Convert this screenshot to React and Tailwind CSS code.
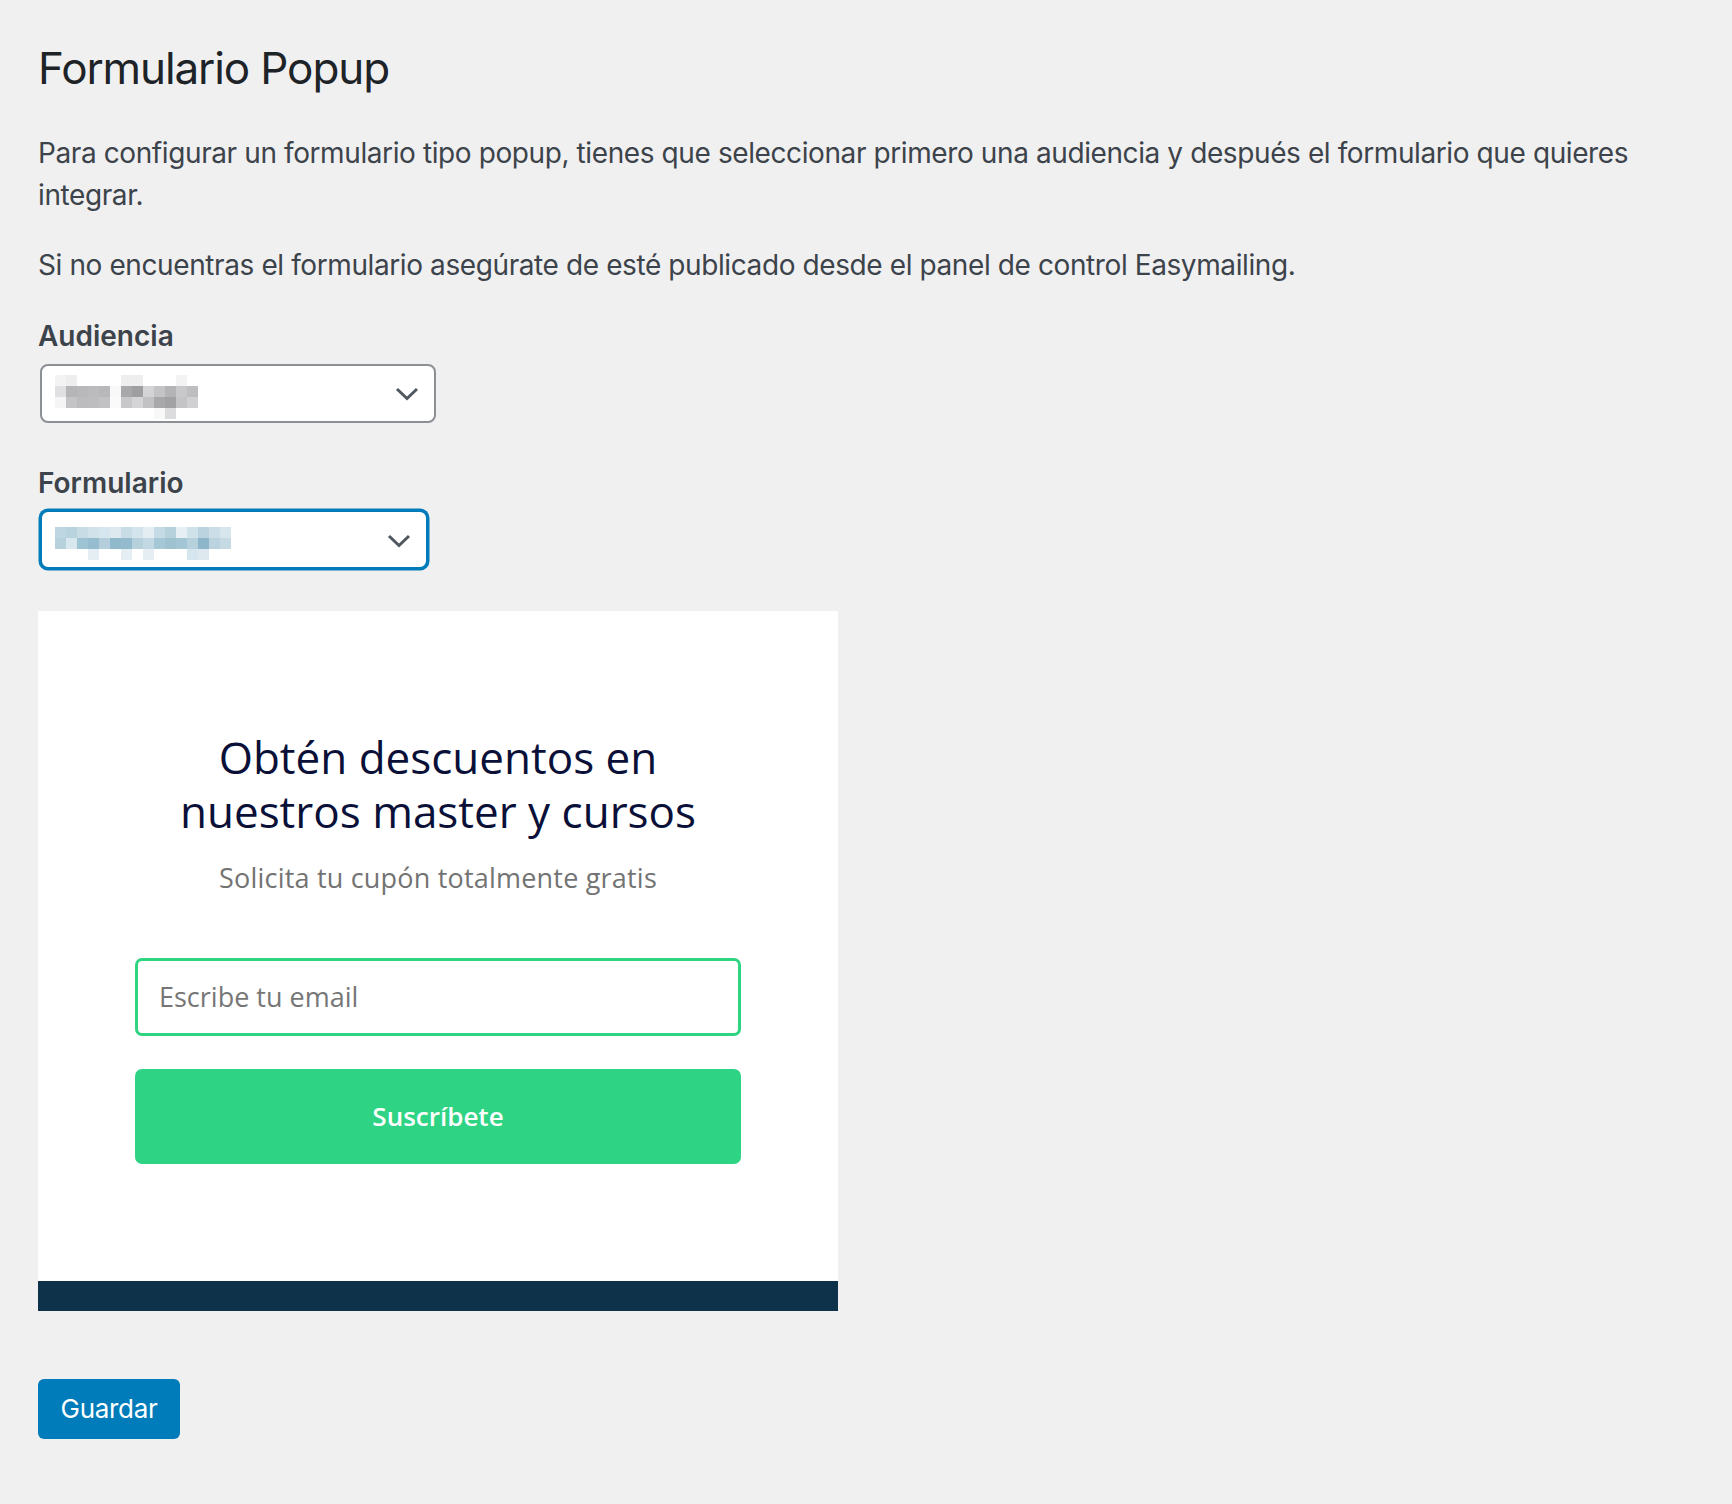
import React from "react";

// pixelated (blurred) values shown inside the two selects
const audienciaPixels = [
  ["#f3f3f4", "#eeeeef", null, null, null, null, "#eeeeef", "#eeeeef", null, null, null, "#f3f3f4", null],
  ["#e0e0e2", "#b5b5b7", "#b8b8ba", "#bbbbbd", "#b8b8ba", "#f8f8f8", "#a8a8aa", "#9e9ea0", "#d4d4d6", "#c4c4c6", "#b4b4b6", "#c8c8ca", "#bebec0"],
  ["#f5f5f5", "#c4c4c6", "#bcbcbe", "#bdbdbf", "#c2c2c4", "#fafafa", "#c8c8ca", "#d4d4d6", "#c2c2c4", "#a8a8aa", "#a2a2a4", "#c4c4c6", "#d0d0d2"],
  [null, null, null, null, null, null, null, null, null, "#f8f8f8", "#dcdcde", null, null],
];

const formularioPixels = [
  ["#bed6e2", "#b8d2de", "#c8dce6", "#d2e2ea", "#d6e6ee", "#dde9ef", "#c8dce6", "#d4e4ec", "#e4eef2", "#c4dae4", "#b6d0dc", "#e6eff4", "#cfe1e9", "#bad3df", "#cbdde6", "#d7e6ed"],
  ["#b6d0dc", "#d8e7ee", "#9ec3d3", "#96bdcf", "#b4cfdb", "#91b9cc", "#93bacd", "#b7d1dc", "#c2d8e2", "#a6c7d5", "#9fc2d1", "#a4c5d4", "#b7d1dc", "#8db6ca", "#bad3de", "#c6dae3"],
  [null, null, null, "#e4eef3", null, null, "#e4eef3", null, "#e4eef3", null, null, null, "#d6e6ee", "#dde9ef", null, null],
];

function Pixels({ rows }) {
  const size = 11;
  const cols = rows[0].length;
  return (
    <svg width={cols * size} height={rows.length * size} className="block shrink-0">
      {rows.map((row, y) =>
        row.map((c, x) => (c ? <rect key={`${x}-${y}`} x={x * size} y={y * size} width={size} height={size} fill={c} /> : null))
      )}
    </svg>
  );
}

function Chevron() {
  return (
    <svg width="24" height="14" viewBox="0 0 24 14" className="shrink-0">
      <polyline points="2,2 12,11.5 22,2" fill="none" stroke="#50575e" strokeWidth="3" />
    </svg>
  );
}

export default function App() {
  return (
    <div className="min-h-screen bg-[#f0f0f1] pl-[38px] pr-[40px] pt-[40px] pb-[66px] font-['Inter','Liberation_Sans',sans-serif] text-[#3c434a]">
      <h1 className="text-[44px] leading-[56px] tracking-[-1.1px] font-normal text-[#1d2327]">Formulario Popup</h1>

      <p className="mt-[36px] text-[28px] leading-[42px] tracking-[-0.4px]">
        Para configurar un formulario tipo popup, tienes que seleccionar primero una audiencia y después el formulario que quieres integrar.
      </p>
      <p className="mt-[28px] text-[28px] leading-[42px] tracking-[-0.4px]">
        Si no encuentras el formulario asegúrate de esté publicado desde el panel de control Easymailing.
      </p>

      <label className="block mt-[29px] text-[28px] leading-[42px] font-semibold">Audiencia</label>
      <div className="mt-[7px] ml-[2px] w-[396px] h-[59px] bg-white border-2 border-[#8c8f94] rounded-[8px] flex items-center justify-between pl-[13px] pr-[15px] pt-[6px]">
        <Pixels rows={audienciaPixels} />
        <div className="-mt-[6px]">
          <Chevron />
        </div>
      </div>

      <label className="block mt-[39px] text-[28px] leading-[42px] font-semibold">Formulario</label>
      <div className="mt-[6px] ml-[2px] w-[388px] h-[59px] bg-white border-2 border-[#007cba] shadow-[0_0_0_1.5px_#007cba] rounded-[8px] flex items-center justify-between pl-[13px] pr-[15px] pt-[8px]">
        <Pixels rows={formularioPixels} />
        <div className="-mt-[6px]">
          <Chevron />
        </div>
      </div>

      <div className="mt-[42px] w-[800px] bg-white font-['Open_Sans','Lato',sans-serif]">
        <div className="flex flex-col items-center pt-[119px] pb-[117px]">
          <h2 className="text-[44px] leading-[54px] text-[#0a1038] text-center">
            Obtén descuentos en
            <br />
            nuestros master y cursos
          </h2>
          <p className="mt-[22px] text-[27px] leading-[36px] tracking-[0.2px] text-[#737373]">Solicita tu cupón totalmente gratis</p>

          <div className="mt-[62px] w-[606px] h-[78px] border-[3px] border-[#2ed47f] rounded-[7px] flex items-center pl-[21px] text-[27px] text-[#767676]">
            Escribe tu email
          </div>
          <button className="mt-[33px] w-[606px] h-[95px] bg-[#2ed483] rounded-[7px] text-white text-[26px] font-semibold">
            Suscríbete
          </button>
        </div>
        <div className="h-[30px] bg-[#0d3249]" />
      </div>

      <button className="mt-[68px] w-[142px] h-[60px] bg-[#007cba] rounded-[6px] text-white text-[26px] tracking-[-0.3px] leading-none">
        Guardar
      </button>
    </div>
  );
}
